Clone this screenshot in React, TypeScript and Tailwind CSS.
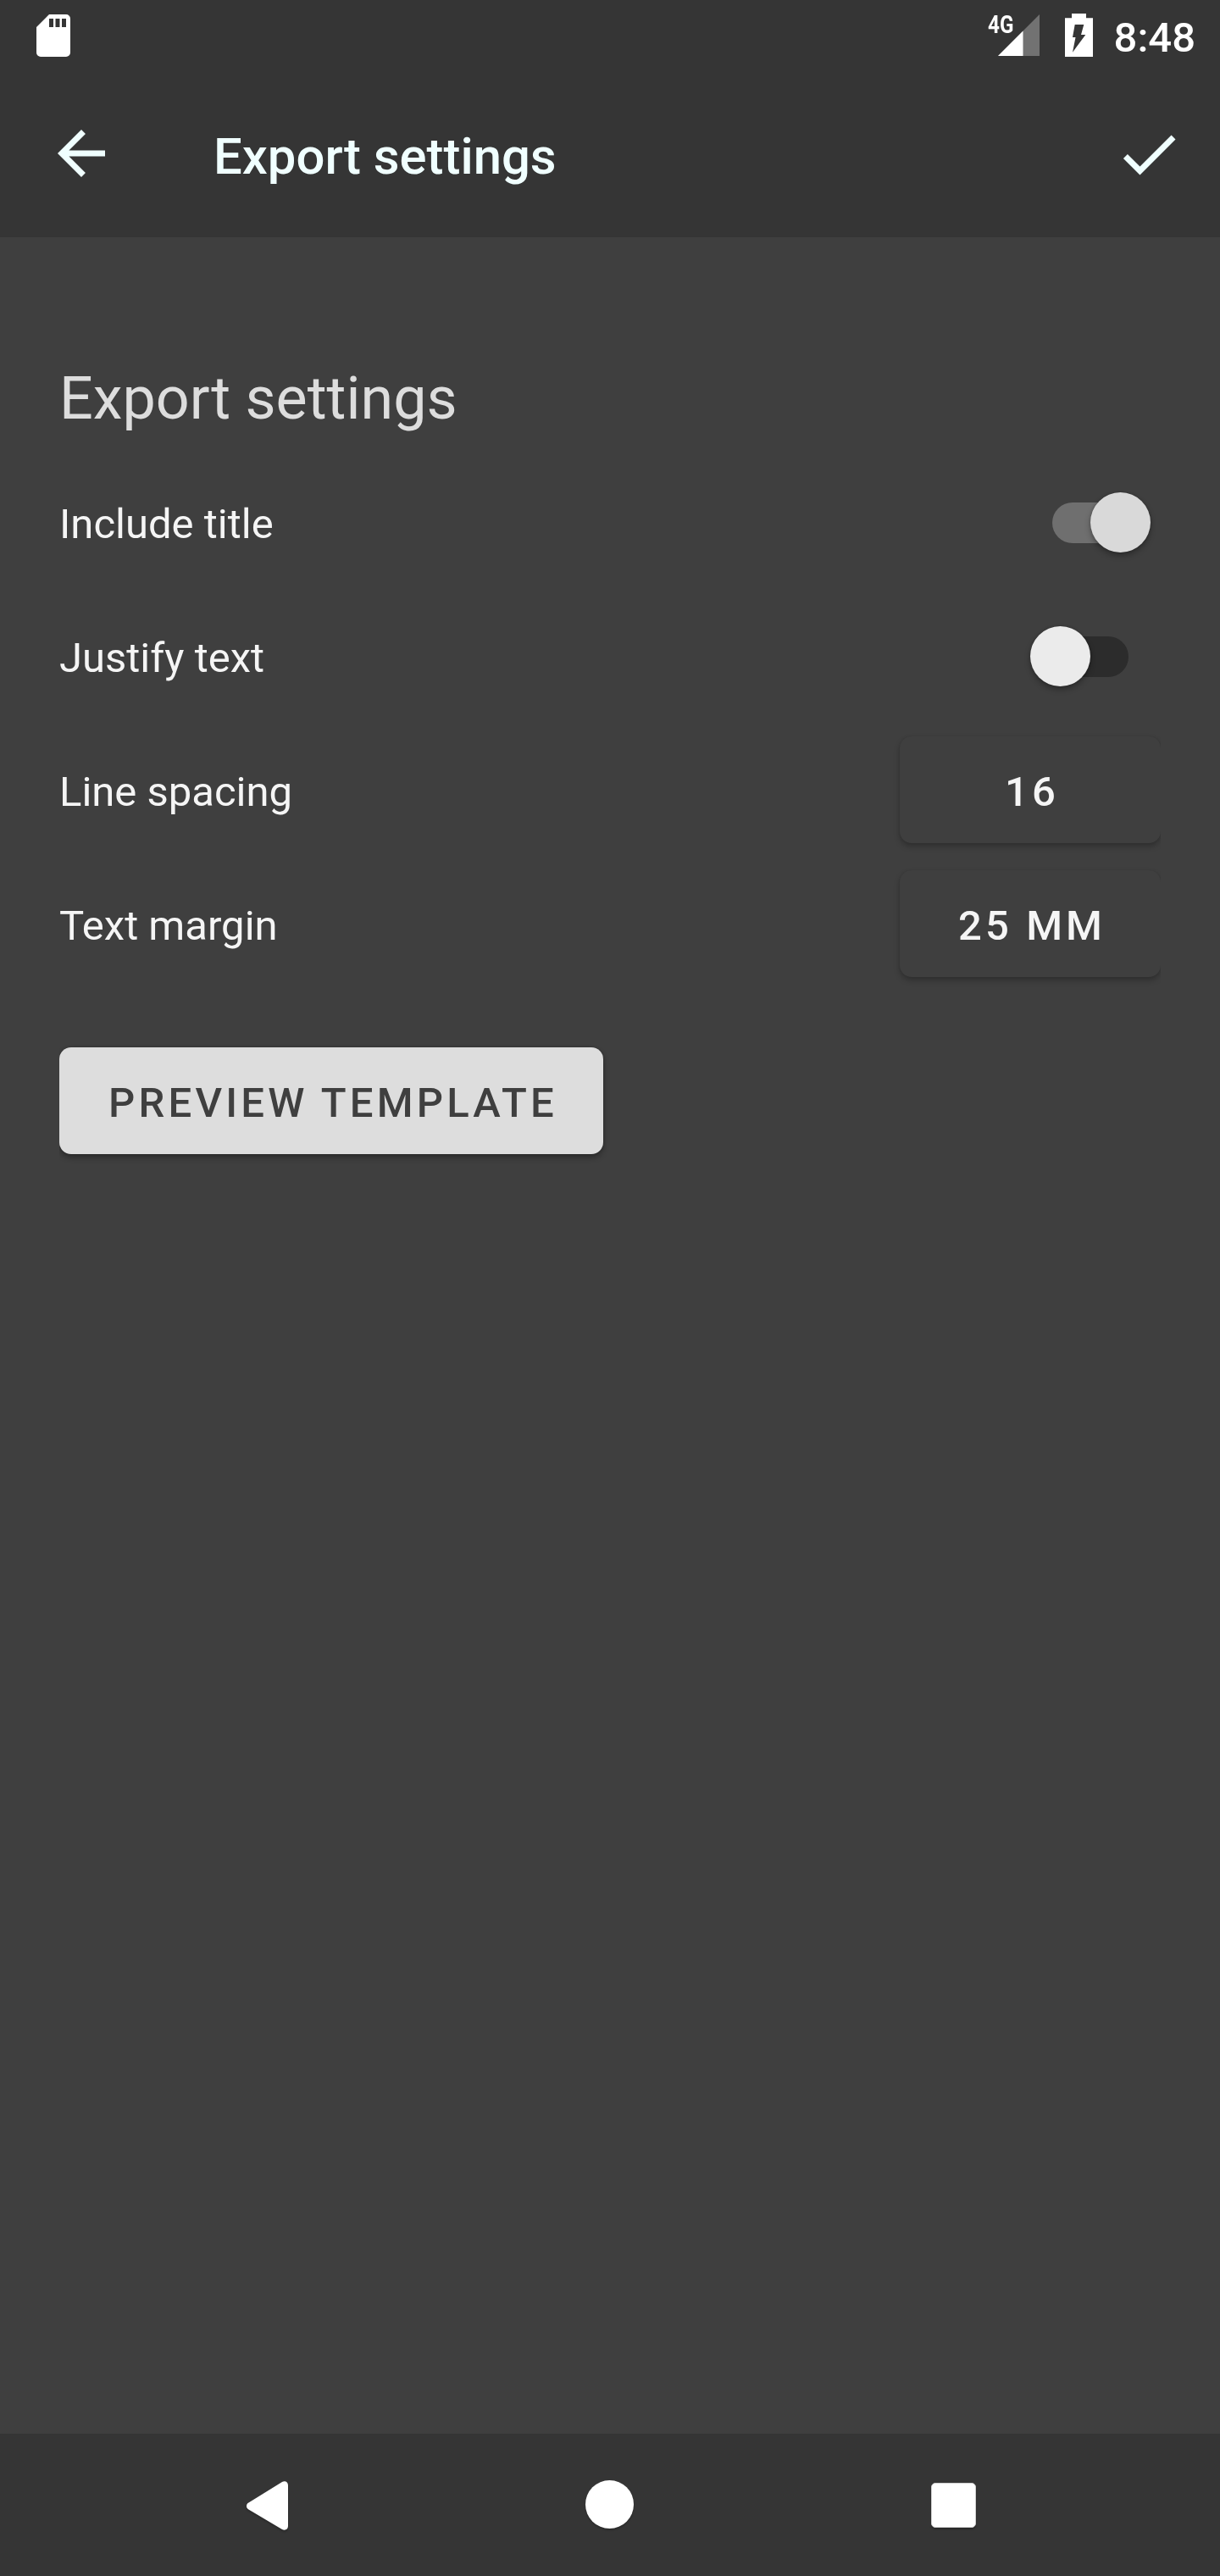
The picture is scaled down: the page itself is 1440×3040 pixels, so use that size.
import type { ReactNode } from "react";

function StatusBar() {
  return (
    <div className="flex h-[84px] items-start justify-between pl-[43px] pr-[29px]">
      <svg className="mt-[17px] h-[50px] w-[40px]" viewBox="0 0 40 50">
        <path
          fill="#fff"
          fillRule="evenodd"
          d="M15 0H35a5 5 0 0 1 5 5V45a5 5 0 0 1-5 5H5a5 5 0 0 1-5-5V15ZM15 5V15H20V5ZM22.5 5V15H27.5V5ZM30 5V15H35V5Z"
        />
      </svg>
      <div className="flex items-start">
        <div className="relative h-[84px] w-[62px]">
          <svg className="absolute left-0 top-0 h-[84px] w-[62px]" viewBox="0 0 62 84">
            <path fill="#727272" d="M61 17V66H12Z" />
            <path fill="#fff" d="M41.5 36.5V66H12Z" />
          </svg>
          <span className="absolute left-0 top-[12px] origin-left scale-x-[0.82] text-[29.5px] leading-[34px] font-bold text-white">
            4G
          </span>
        </div>
        <svg className="ml-[29px] mt-[16px] h-[51px] w-[33px]" viewBox="0 0 33 51">
          <path
            fill="#fff"
            fillRule="evenodd"
            d="M8 0H25V5.2H33V51H0V5.2H8ZM11.7 13L9 28H12.5L9 45.7L24.3 25H19L22.3 13Z"
          />
        </svg>
        <span className="ml-[25px] mt-[14px] text-[49px] leading-[62px] font-medium text-white">8:48</span>
      </div>
    </div>
  );
}

function Toolbar() {
  return (
    <header className="flex h-[196px] items-center pl-[54px] pr-[42px] text-[#f0ffff]">
      <svg className="mb-[3px] size-[84px]" viewBox="0 0 24 24" fill="currentColor">
        <path d="M20 11H7.83l5.59-5.59L12 4l-8 8 8 8 1.41-1.41L7.83 13H20z" />
      </svg>
      <h1 className="ml-[114px] grow pt-[5px] text-[59.8px] leading-[72px] font-medium">Export settings</h1>
      <svg className="size-[84px]" viewBox="0 0 24 24" fill="currentColor">
        <path d="M9 16.17L4.83 12l-1.42 1.41L9 19 21 7l-1.41-1.41z" />
      </svg>
    </header>
  );
}

function Row({ label, children }: { label: string; children: ReactNode }) {
  return (
    <div className="flex h-[158px] items-center justify-between">
      <span className="pt-[5px] text-[49px] leading-[58px] text-[#f5f5f5]">{label}</span>
      {children}
    </div>
  );
}

function Toggle({ on }: { on: boolean }) {
  return (
    <button role="switch" aria-checked={on} className="relative mr-[12px] h-[71px] w-[142px]">
      <span
        className={`absolute left-[26px] top-[12px] h-[48px] w-[90px] rounded-full ${on ? "bg-[#6f6f6f]" : "bg-[#2c2c2c]"}`}
      />
      <span
        className={`absolute top-0 size-[71px] rounded-full shadow-[0_4px_7px_rgba(0,0,0,0.3),0_0_3px_rgba(0,0,0,0.2)] ${on ? "left-[71px] bg-[#d9d9d9]" : "left-0 bg-[#ebebeb]"}`}
      />
    </button>
  );
}

function ValueButton({ children }: { children: ReactNode }) {
  return (
    <div className="-my-4 overflow-hidden py-4 pl-4">
      <button className="flex h-[126px] w-[308px] items-center justify-center rounded-[14px] bg-[#3f3f3f] pl-[4px] pt-[5px] text-[49px] font-medium tracking-[4.1px] text-[#f5f5f5] shadow-[0_4px_7px_rgba(0,0,0,0.25),0_0_3px_rgba(0,0,0,0.08)]">
        {children}
      </button>
    </div>
  );
}

function NavBar() {
  return (
    <nav className="flex h-[168px] bg-[#353535] pl-[291px] pt-[55px] text-white">
      <svg className="mt-px h-[60px] w-[49px] drop-shadow-[0_2px_1px_rgba(0,0,0,0.2)]" viewBox="0 0 49 60">
        <path
          fill="currentColor"
          d="M42 1.1C45.5-.9 49 1.2 49 5V53C49 56.8 45.5 58.9 42 56.9L2 33.2C-.7 31.6-.7 27.4 2 25.8Z"
        />
      </svg>
      <div className="ml-[351px] size-[57px] rounded-full bg-white shadow-[0_2px_2px_rgba(0,0,0,0.2)]" />
      <div className="ml-[351px] mt-[3px] size-[53px] rounded-[5px] border border-[#d0d0d0] bg-white shadow-[0_2px_2px_rgba(0,0,0,0.25)]" />
    </nav>
  );
}

export default function App() {
  return (
    <div className="flex h-[3040px] w-[1440px] flex-col bg-[#3f3f3f] font-['Roboto',sans-serif]">
      <div className="bg-[#353535]">
        <StatusBar />
        <Toolbar />
      </div>
      <main className="grow px-[70px] pt-[149px]">
        <h2 className="h-[108px] text-[70px] leading-[82px] text-[#dddddd]">Export settings</h2>
        <Row label="Include title">
          <Toggle on />
        </Row>
        <Row label="Justify text">
          <Toggle on={false} />
        </Row>
        <Row label="Line spacing">
          <ValueButton>16</ValueButton>
        </Row>
        <Row label="Text margin">
          <ValueButton>25 MM</ValueButton>
        </Row>
        <div className="mt-[51px] overflow-hidden pb-4 pt-4">
          <button className="flex h-[126px] w-[642px] items-center justify-center rounded-[14px] bg-[#dddddd] pl-[4px] pt-[5px] text-[49px] font-medium tracking-[4.2px] text-[#3f3f3f] shadow-[0_4px_7px_rgba(0,0,0,0.32),0_0_3px_rgba(0,0,0,0.2)]">
            PREVIEW TEMPLATE
          </button>
        </div>
      </main>
      <NavBar />
    </div>
  );
}
